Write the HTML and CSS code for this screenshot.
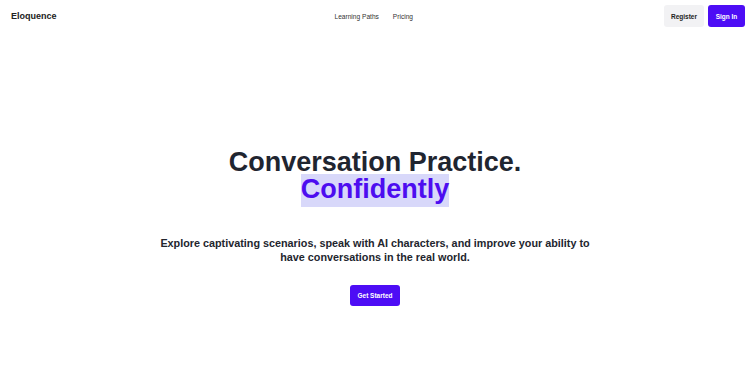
FILE: index.html
```html
<!DOCTYPE html>
<html lang="en">
<head>
    <meta charset="UTF-8">
    <meta name="viewport" content="width=device-width, initial-scale=1.0">
    <title>Eloquence</title>
    <link rel="stylesheet" href="styles.css">
</head>
<body>
    <header class="navbar">
        <div class="brand">Eloquence</div>
        <nav class="nav-links">
            <a href="#">Learning Paths</a>
            <a href="#">Pricing</a>
        </nav>
        <div class="nav-actions">
            <button class="btn btn-light">Register</button>
            <button class="btn btn-primary">Sign In</button>
        </div>
    </header>

    <main class="hero">
        <h1>Conversation Practice.<br><span class="highlight">Confidently</span></h1>
        <p class="subtitle">Explore captivating scenarios, speak with AI characters, and improve your ability to have conversations in the real world.</p>
        <button class="btn btn-primary btn-cta">Get Started</button>
    </main>
</body>
</html>
```

FILE: styles.css
```css
* {
    margin: 0;
    padding: 0;
    box-sizing: border-box;
}

body {
    background-color: #ffffff;
    font-family: "Liberation Sans", Arial, sans-serif;
    color: #1f2430;
}

.navbar {
    display: flex;
    align-items: center;
    height: 32px;
    padding: 0 5px 0 11px;
}

.brand {
    flex: 1;
    font-size: 9px;
    font-weight: bold;
    color: #222;
}

.nav-links {
    display: flex;
    gap: 14px;
    margin-right: 251px;
}

.nav-links a {
    font-size: 6.6px;
    color: #333;
    text-decoration: none;
}

.nav-actions {
    display: flex;
    gap: 4px;
}

.btn {
    font-family: "Liberation Sans", Arial, sans-serif;
    font-weight: bold;
    font-size: 6.5px;
    border: none;
    border-radius: 3px;
    cursor: pointer;
    height: 22px;
}

.btn-light {
    background-color: #f2f2f4;
    color: #222;
    width: 40px;
}

.btn-primary {
    background-color: #4d0df5;
    color: #ffffff;
    width: 37px;
}

.hero {
    display: flex;
    flex-direction: column;
    align-items: center;
    text-align: center;
    padding-top: 117px;
}

h1 {
    font-size: 27px;
    line-height: 27px;
    font-weight: bold;
    color: #1f2530;
}

.highlight {
    color: #4d0df0;
    background-color: #d8d8fa;
    padding: 0 0 3px;
}

.subtitle {
    margin-top: 33px;
    max-width: 440px;
    font-size: 10.8px;
    line-height: 14px;
    font-weight: bold;
    color: #23262e;
}

.btn-cta {
    margin-top: 21px;
    width: 50px;
    height: 21px;
}
```
